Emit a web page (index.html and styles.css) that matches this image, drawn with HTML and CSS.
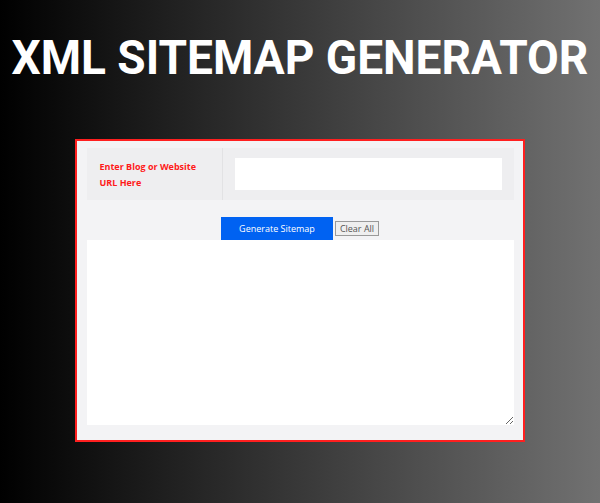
FILE: index.html
```html
<!DOCTYPE html>
<html>
<head>
<meta charset="utf-8">
<link rel="stylesheet" href="styles.css">
</head>
<body>
<div class="page">
  <h1 class="title">XML SITEMAP GENERATOR</h1>
  <div class="card">
    <div class="url-row">
      <div class="label-cell">Enter Blog or Website URL Here</div>
      <div class="input-cell"><input class="url-input" type="text"></div>
    </div>
    <div class="actions">
      <button class="btn-generate">Generate Sitemap</button>
      <button class="btn-clear">Clear All</button>
    </div>
    <textarea class="output"></textarea>
  </div>
</div>
</body>
</html>
```
FILE: styles.css
```css
* { box-sizing: border-box; }
html, body { margin: 0; padding: 0; }
body {
  width: 600px;
  height: 503px;
  overflow: hidden;
  background: linear-gradient(to right, #000000 0%, #717171 100%);
  font-family: "Open Sans", "Noto Sans", sans-serif;
}
.page {
  display: flex;
  flex-direction: column;
  align-items: center;
  padding-top: 28px;
}
.title {
  margin: 0;
  color: #ffffff;
  font-family: Roboto, "Liberation Sans", sans-serif;
  font-weight: 700;
  font-size: 49px;
  line-height: 60px;
  letter-spacing: 0;
  white-space: nowrap;
  transform: scaleX(0.94);
}
.card {
  margin-top: 51px;
  margin-left: -1px;
  width: 450px;
  height: 303px;
  border: 2px solid #ff1f1f;
  background: #f3f3f5;
  padding: 7px 9px 0 10px;
  display: flex;
  flex-direction: column;
}
.url-row {
  display: flex;
  height: 52px;
  background: #eeeef0;
}
.label-cell {
  width: 136px;
  border-right: 1px solid #e2e2e4;
  padding: 11px 18px 0 13px;
  color: #ff1a1a;
  font-weight: 700;
  font-size: 9px;
  line-height: 16px;
}
.input-cell {
  flex: 1;
  padding: 10px 12px 0 12px;
}
.url-input {
  display: block;
  width: 100%;
  height: 32px;
  border: none;
  background: #ffffff;
  outline: none;
}
.actions {
  display: flex;
  justify-content: center;
  align-items: flex-end;
  gap: 2px;
  margin-top: 17px;
}
.btn-generate {
  width: 112px;
  height: 23px;
  border: none;
  background: #0062f2;
  color: #ffffff;
  font-family: "Open Sans", "Noto Sans", sans-serif;
  font-size: 9px;
  padding: 0;
}
.btn-clear {
  width: 44px;
  height: 15px;
  margin-bottom: 4px;
  border: 1px solid #9a9a9a;
  background: #efefef;
  color: #555555;
  font-family: "Open Sans", "Noto Sans", sans-serif;
  font-size: 9px;
  padding: 0;
  line-height: 13px;
}
.output {
  display: block;
  width: 427px;
  height: 185px;
  border: none;
  background: #ffffff;
  resize: vertical;
  margin: 0;
  outline: none;
}
```
